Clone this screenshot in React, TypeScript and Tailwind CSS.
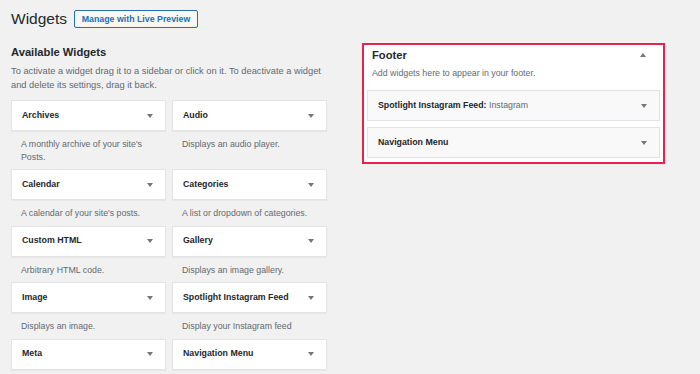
import React from "react";

type Widget = { name: string; desc: string };

const widgets: Widget[] = [
  { name: "Archives", desc: "A monthly archive of your site's Posts." },
  { name: "Audio", desc: "Displays an audio player." },
  { name: "Calendar", desc: "A calendar of your site's posts." },
  { name: "Categories", desc: "A list or dropdown of categories." },
  { name: "Custom HTML", desc: "Arbitrary HTML code." },
  { name: "Gallery", desc: "Displays an image gallery." },
  { name: "Image", desc: "Displays an image." },
  { name: "Spotlight Instagram Feed", desc: "Display your Instagram feed" },
  { name: "Meta", desc: "" },
  { name: "Navigation Menu", desc: "" },
];

const Arrow: React.FC<{ up?: boolean }> = ({ up }) => (
  <svg width="6" height="4" viewBox="0 0 6 4" className="shrink-0">
    {up ? (
      <path d="M3 0 L6 4 L0 4 Z" fill="#72777c" />
    ) : (
      <path d="M0 0 L6 0 L3 4 Z" fill="#72777c" />
    )}
  </svg>
);

const WidgetCard: React.FC<{ w: Widget }> = ({ w }) => (
  <div>
    <div className="h-[31px] bg-white border border-[#e2e4e7] shadow-[0_1px_1px_rgba(0,0,0,0.04)] flex items-center justify-between pl-[10px] pr-[12px]">
      <span className="text-[8.8px] font-bold text-[#23282d]">{w.name}</span>
      <Arrow />
    </div>
    {w.desc && (
      <p className="pl-[10px] pr-[12px] pt-[7px] pb-[6px] text-[8.8px] leading-[12.5px] text-[#646970]">
        {w.desc}
      </p>
    )}
  </div>
);

const App: React.FC = () => {
  return (
    <div
      className="w-[700px] h-[374px] overflow-hidden bg-[#f1f1f1] pl-[11px] pt-[10px]"
      style={{ fontFamily: "'Liberation Sans', Arial, sans-serif" }}
    >
      <div className="flex items-center gap-[7px] h-[18px]">
        <h1 className="text-[15.5px] leading-[18px] text-[#23282d] font-normal">Widgets</h1>
        <button className="h-[18px] w-[124px] border border-[#2271b1] rounded-[2px] bg-[#f6f7f7] text-[8.8px] font-bold text-[#2271b1] leading-none">
          Manage with Live Preview
        </button>
      </div>

      <div className="flex gap-[35px] mt-[15px]">
        <div className="w-[316px]">
          <h2 className="mt-[2px] text-[11.2px] font-bold text-[#23282d] leading-[14px]">Available Widgets</h2>
          <p className="mt-[5px] text-[9.3px] leading-[14px] text-[#646970]">
            To activate a widget drag it to a sidebar or click on it. To deactivate a widget and delete its settings, drag it back.
          </p>
          <div className="grid grid-cols-2 gap-x-[6px] mt-[8px]">
            {widgets.map((w) => (
              <WidgetCard key={w.name} w={w} />
            ))}
          </div>
        </div>

        <div className="w-[303px] self-start border-2 border-[#e2244f] bg-white px-[3px] pb-[4px]">
          <div className="flex items-center justify-between pl-[5px] pr-[14px] pt-[3px]">
            <h3 className="text-[11.2px] font-bold text-[#23282d] leading-[14px]">Footer</h3>
            <Arrow up />
          </div>
          <p className="pl-[5px] mt-[5px] text-[8.8px] leading-[12px] text-[#646970]">
            Add widgets here to appear in your footer.
          </p>
          <div className="mt-[11px] flex flex-col gap-[6px]">
            <div className="h-[31px] bg-[#f9f9f9] border border-[#e2e4e7] flex items-center justify-between pl-[10px] pr-[12px]">
              <span className="text-[8.8px] font-bold text-[#23282d]">
                Spotlight Instagram Feed: <span className="font-normal text-[#646970]">Instagram</span>
              </span>
              <Arrow />
            </div>
            <div className="h-[31px] bg-[#f9f9f9] border border-[#e2e4e7] flex items-center justify-between pl-[10px] pr-[12px]">
              <span className="text-[8.8px] font-bold text-[#23282d]">Navigation Menu</span>
              <Arrow />
            </div>
          </div>
        </div>
      </div>
    </div>
  );
};

export default App;
